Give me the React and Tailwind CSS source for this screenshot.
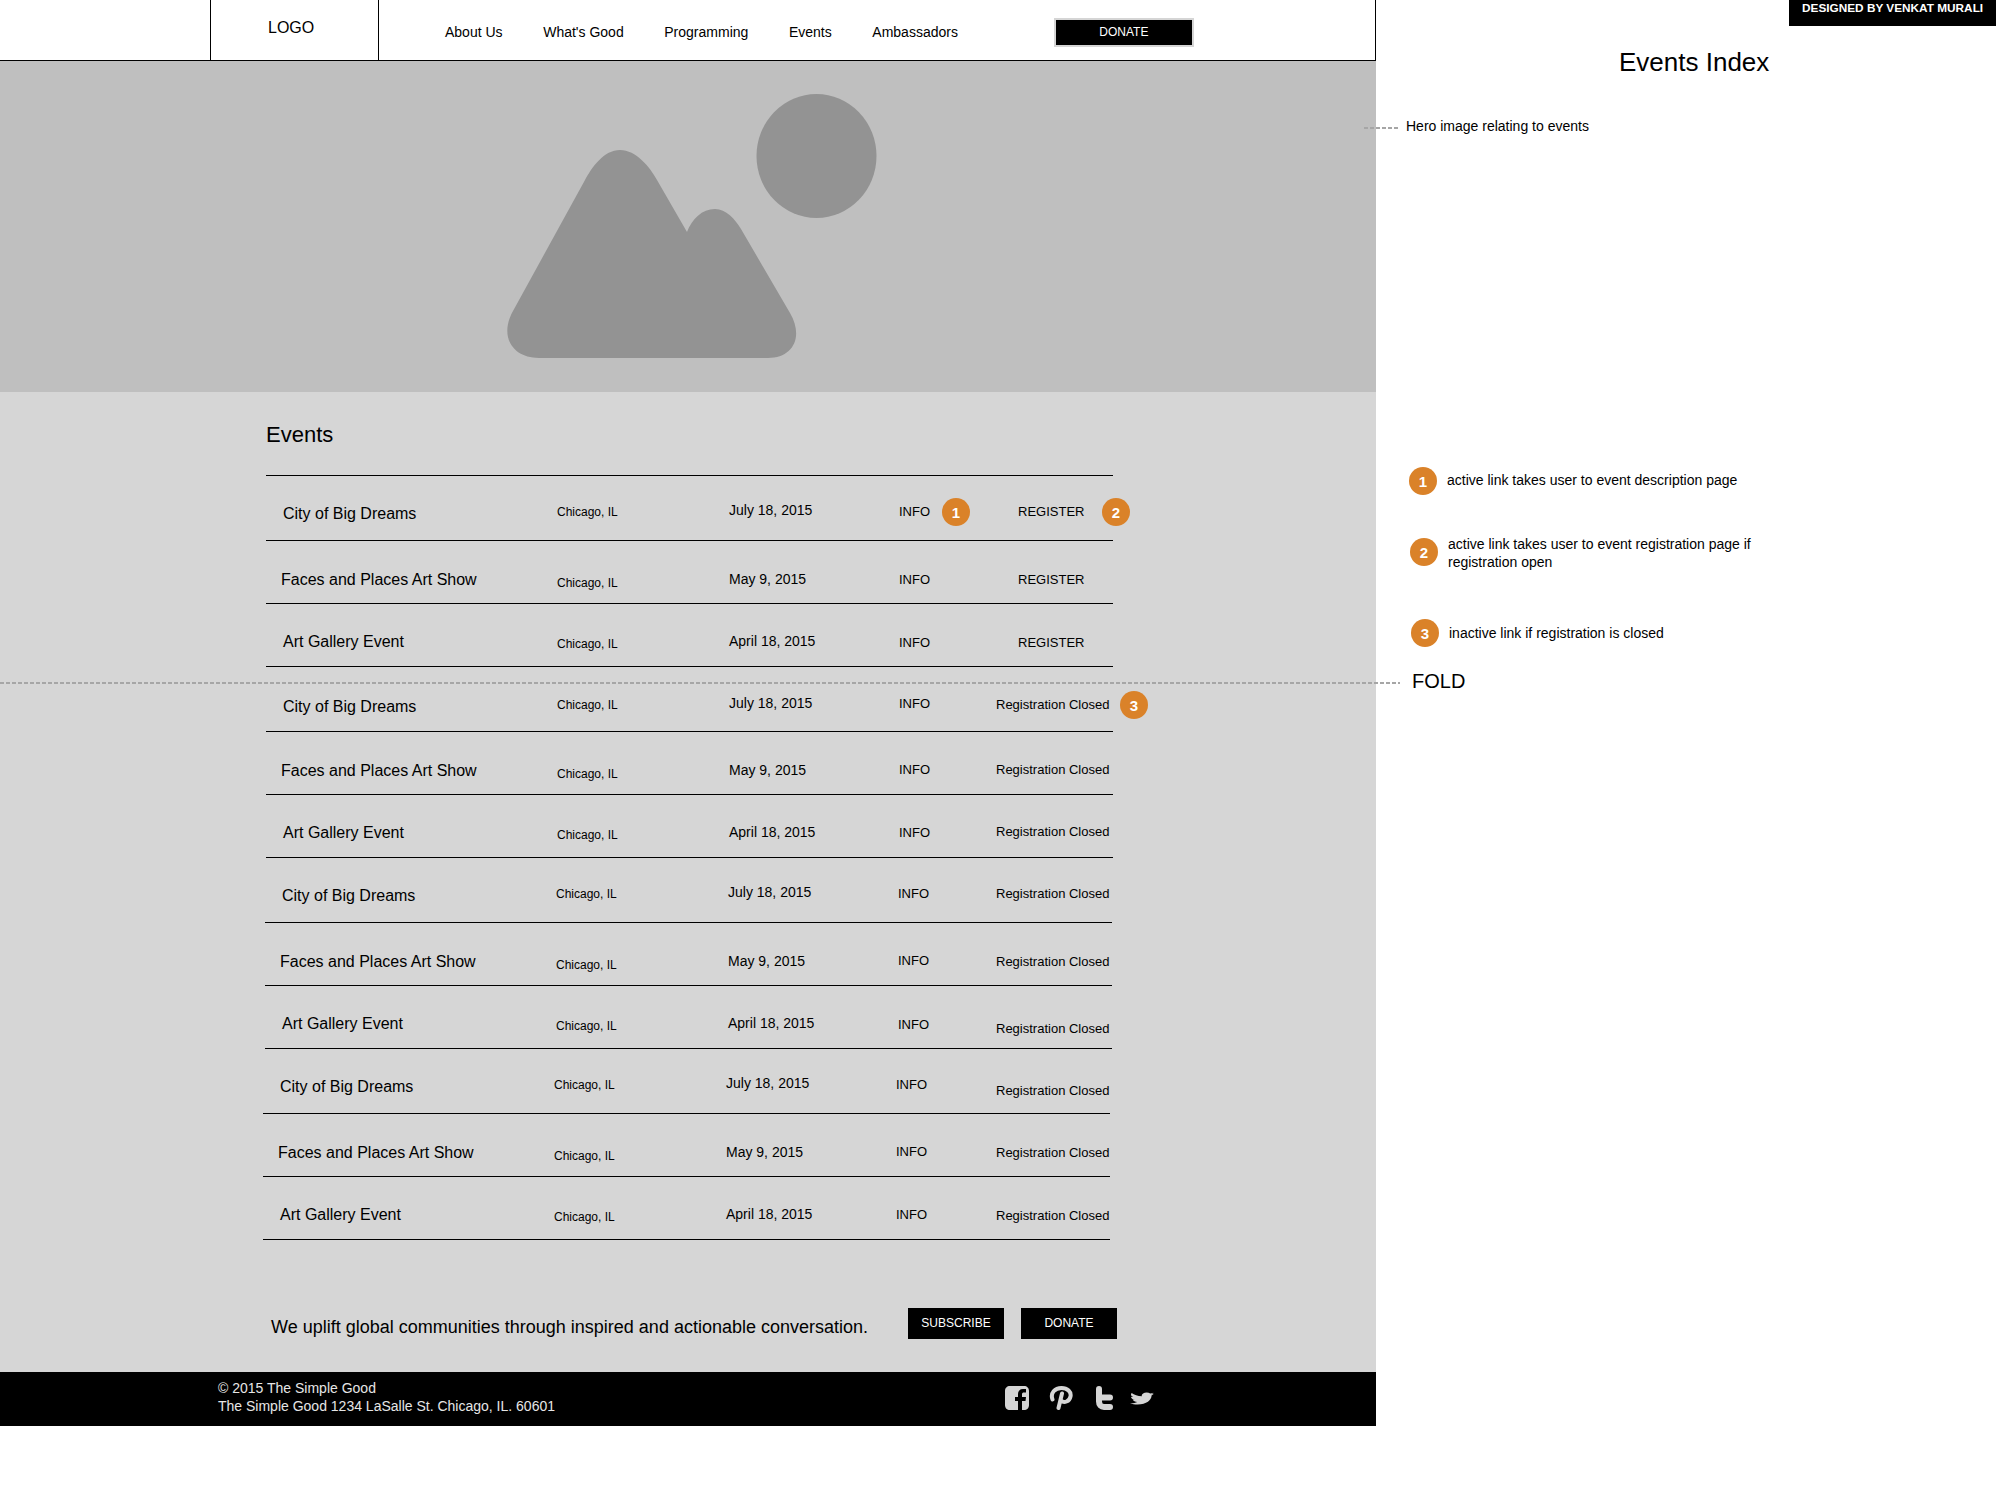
import React from "react";
import { FaTwitter } from "react-icons/fa";

const A = "City of Big Dreams", B = "Faces and Places Art Show", C = "Art Gallery Event";
const rows = [
  { line: 540, x: 266, t: A, tx: 283, ty: 514, cx: 557, cy: 512, date: "July 18, 2015", dx: 729, dy: 510, ix: 899, iy: 512, reg: "REGISTER", rx: 1018, ry: 512, b1: true, b2: true },
  { line: 603, x: 266, t: B, tx: 281, ty: 580, cx: 557, cy: 583, date: "May 9, 2015", dx: 729, dy: 579, ix: 899, iy: 580, reg: "REGISTER", rx: 1018, ry: 580 },
  { line: 666, x: 266, t: C, tx: 283, ty: 642, cx: 557, cy: 644, date: "April 18, 2015", dx: 729, dy: 641, ix: 899, iy: 643, reg: "REGISTER", rx: 1018, ry: 643 },
  { line: 731, x: 266, t: A, tx: 283, ty: 707, cx: 557, cy: 705, date: "July 18, 2015", dx: 729, dy: 703, ix: 899, iy: 704, reg: "Registration Closed", rx: 996, ry: 705, b3: true },
  { line: 794, x: 266, t: B, tx: 281, ty: 771, cx: 557, cy: 774, date: "May 9, 2015", dx: 729, dy: 770, ix: 899, iy: 770, reg: "Registration Closed", rx: 996, ry: 770 },
  { line: 857, x: 266, t: C, tx: 283, ty: 833, cx: 557, cy: 835, date: "April 18, 2015", dx: 729, dy: 832, ix: 899, iy: 833, reg: "Registration Closed", rx: 996, ry: 832 },
  { line: 922, x: 265, t: A, tx: 282, ty: 896, cx: 556, cy: 894, date: "July 18, 2015", dx: 728, dy: 892, ix: 898, iy: 894, reg: "Registration Closed", rx: 996, ry: 894 },
  { line: 985, x: 265, t: B, tx: 280, ty: 962, cx: 556, cy: 965, date: "May 9, 2015", dx: 728, dy: 961, ix: 898, iy: 961, reg: "Registration Closed", rx: 996, ry: 962 },
  { line: 1048, x: 265, t: C, tx: 282, ty: 1024, cx: 556, cy: 1026, date: "April 18, 2015", dx: 728, dy: 1023, ix: 898, iy: 1025, reg: "Registration Closed", rx: 996, ry: 1029 },
  { line: 1113, x: 263, t: A, tx: 280, ty: 1087, cx: 554, cy: 1085, date: "July 18, 2015", dx: 726, dy: 1083, ix: 896, iy: 1085, reg: "Registration Closed", rx: 996, ry: 1091 },
  { line: 1176, x: 263, t: B, tx: 278, ty: 1153, cx: 554, cy: 1156, date: "May 9, 2015", dx: 726, dy: 1152, ix: 896, iy: 1152, reg: "Registration Closed", rx: 996, ry: 1153 },
  { line: 1239, x: 263, t: C, tx: 280, ty: 1215, cx: 554, cy: 1217, date: "April 18, 2015", dx: 726, dy: 1214, ix: 896, iy: 1215, reg: "Registration Closed", rx: 996, ry: 1216 },
];

function Badge({ n, className = "" }) {
  return (
    <span className={"flex h-7 w-7 shrink-0 items-center justify-center rounded-full bg-[#da8229] text-[15px] font-bold leading-none text-white " + className}>
      {n}
    </span>
  );
}

function Row({ r, top }) {
  const cell = (y) => ({ marginTop: y - top - 10 });
  return (
    <div className="flex items-start border-b border-black leading-5" style={{ height: r.line - top + 1, marginLeft: r.x - 266, width: 847 }}>
      <div className="shrink-0 text-[16px]" style={{ ...cell(r.ty), marginLeft: r.tx - r.x, width: r.cx - r.tx }}>{r.t}</div>
      <div className="shrink-0 text-[12px]" style={{ ...cell(r.cy), width: r.dx - r.cx }}>Chicago, IL</div>
      <div className="shrink-0 text-[14px]" style={{ ...cell(r.dy), width: r.ix - r.dx }}>{r.date}</div>
      <div className="relative shrink-0 text-[13px]" style={{ ...cell(r.iy), width: r.rx - r.ix }}>
        INFO
        {r.b1 && <Badge n="1" className="absolute left-[43px] -top-1" />}
      </div>
      <div className="relative shrink-0 whitespace-nowrap text-[13px]" style={cell(r.ry)}>
        {r.reg}
        {r.b2 && <Badge n="2" className="absolute left-[84px] -top-1" />}
        {r.b3 && <Badge n="3" className="absolute left-[124px] -top-1" />}
      </div>
    </div>
  );
}

function SocialIcons() {
  return (
    <div className="-mt-0.5 flex items-center text-[#d5d5d5]">
      <svg width="24" height="24" viewBox="0 0 24 24" fill="currentColor">
        <path fillRule="evenodd" d="M5 0H19C22 0 24 2 24 5V19C24 22 22 24 19 24H17V15H20.5L21 11H17V8.5C17 7.2 17.6 6.6 19 6.6H21V3H18C14.8 3 13 5 13 8V11H10V15H13V24H5C2 24 0 22 0 19V5C0 2 2 0 5 0Z" />
      </svg>
      <svg className="ml-5" width="24" height="24" viewBox="0 0 24 24" fill="none" stroke="currentColor" strokeWidth="4" strokeLinecap="round">
        <path d="M3.5 13.5C1 7 6 2 12.5 2C18.5 2 22.5 6 21.5 10.5C20.5 15.5 15 17.5 12 14.5M13 7.5L9.5 22" />
      </svg>
      <svg className="ml-[22px]" width="18" height="24" viewBox="0 0 18 24" fill="none" stroke="currentColor" strokeWidth="6" strokeLinecap="round">
        <path d="M4 3V15.5C4 19 6 21 9 21H15M4 11.5H15" />
      </svg>
      <FaTwitter className="ml-[17px]" style={{ width: 24, height: 15 }} preserveAspectRatio="none" />
    </div>
  );
}

export default function App() {
  return (
    <div className="relative flex min-h-[1497px] w-[1996px] overflow-hidden bg-white font-['Liberation_Sans',Arial,sans-serif] text-black">
      <div className="flex w-[1376px] shrink-0 flex-col self-start">
        <header className="flex h-[61px] items-stretch border-r border-b border-black">
          <div className="ml-[210px] w-[169px] border-x border-black pt-[18px] pl-[57px] text-[16px] leading-5">LOGO</div>
          <nav className="ml-[66px] flex items-center gap-[40.6px] pt-[5px] text-[14px]">
            <span>About Us</span>
            <span>What's Good</span>
            <span>Programming</span>
            <span>Events</span>
            <span>Ambassadors</span>
          </nav>
          <div className="ml-24 mt-[18px] flex h-[29px] w-[140px] items-center justify-center border-2 border-[#d5d5d5] bg-black pb-0.5 text-[12px] text-white">DONATE</div>
        </header>

        <section className="h-[331px] bg-[#bfbfbf]">
          <svg className="h-full w-full" viewBox="0 61 1376 331" fill="#939393">
            <ellipse cx="816.5" cy="156" rx="60" ry="62" />
            <path d="M539 358C512 358 499 336 513 311L585 180C592 167 604 150 620 150C636 150 650 167 657 180L687 232C692 219 702 209 715 209C726 209 735 219 741 229L790 313C804 337 793 358 768 358Z" />
          </svg>
        </section>

        <main className="flex h-[980px] flex-col bg-[#d6d6d6] pl-[266px]">
          <h1 className="mt-[29px] text-[22px] font-normal leading-7">Events</h1>
          <div className="mt-[26px] w-[847px] border-t border-black" />
          {rows.map((r, i) => (
            <Row key={i} r={r} top={i === 0 ? 476 : rows[i - 1].line + 1} />
          ))}
          <div className="mt-[68px] flex items-start">
            <p className="ml-[5px] mt-[7px] w-[637px] text-[18px] leading-6">We uplift global communities through inspired and actionable conversation.</p>
            <div className="flex h-[31px] w-[96px] items-center justify-center bg-black pb-0.5 text-[12px] text-white">SUBSCRIBE</div>
            <div className="ml-[17px] flex h-[31px] w-[96px] items-center justify-center bg-black pb-0.5 text-[12px] text-white">DONATE</div>
          </div>
        </main>

        <footer className="flex h-[54px] items-center justify-between bg-black pr-[222px] pl-[218px] text-[#e6e6e6]">
          <div className="-mt-[5px] text-[14px] leading-[18px]">
            <div>© 2015 The Simple Good</div>
            <div>The Simple Good 1234 LaSalle St. Chicago, IL. 60601</div>
          </div>
          <SocialIcons />
        </footer>
      </div>

      <aside className="flex min-w-0 flex-1 flex-col text-[14px]">
        <div className="flex h-[26px] w-[207px] items-start self-end bg-black pl-[13px] text-[11.8px] font-bold text-white">DESIGNED BY VENKAT MURALI</div>
        <h2 className="ml-[243px] mt-5 text-[26px] font-normal leading-8">Events Index</h2>
        <p className="ml-[30px] mt-[38px] leading-5">Hero image relating to events</p>
        <div className="ml-[33px] mt-[331px] flex items-center gap-2.5">
          <Badge n="1" />
          <span className="-mt-0.5">active link takes user to event description page</span>
        </div>
        <div className="ml-[34px] mt-10 flex items-start gap-2.5 leading-[18px]">
          <Badge n="2" className="mt-[3px]" />
          <span>active link takes user to event registration page if<br />registration open</span>
        </div>
        <div className="ml-[35px] mt-12 flex items-center gap-2.5">
          <Badge n="3" />
          <span>inactive link if registration is closed</span>
        </div>
        <div className="ml-9 mt-[22px] text-[20px] leading-6">FOLD</div>
      </aside>

      <div className="absolute top-[127px] left-[1364px] h-0.5 w-9 bg-[repeating-linear-gradient(90deg,#a6a6a6_0_4px,transparent_4px_6px)]" />
      <div className="absolute top-[682px] left-0 h-0.5 w-[1400px] bg-[repeating-linear-gradient(90deg,#a6a6a6_0_4px,transparent_4px_6px)]" />
    </div>
  );
}
